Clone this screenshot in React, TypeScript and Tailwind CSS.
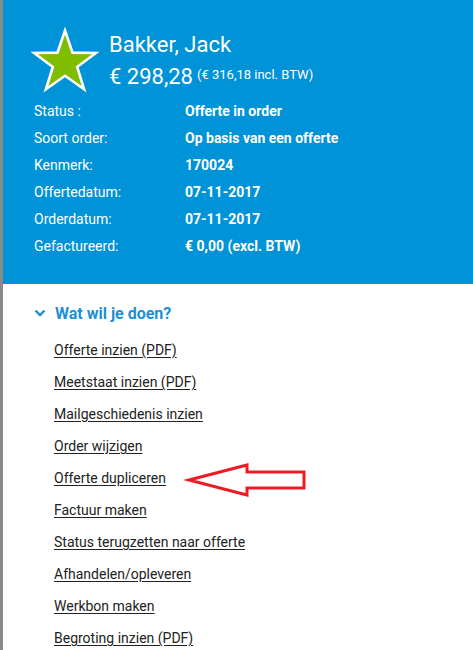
import React from "react";

const rows: [string, string][] = [
  ["Status :", "Offerte in order"],
  ["Soort order:", "Op basis van een offerte"],
  ["Kenmerk:", "170024"],
  ["Offertedatum:", "07-11-2017"],
  ["Orderdatum:", "07-11-2017"],
  ["Gefactureerd:", "€ 0,00 (excl. BTW)"],
];

const links = [
  "Offerte inzien (PDF)",
  "Meetstaat inzien (PDF)",
  "Mailgeschiedenis inzien",
  "Order wijzigen",
  "Offerte dupliceren",
  "Factuur maken",
  "Status terugzetten naar offerte",
  "Afhandelen/opleveren",
  "Werkbon maken",
  "Begroting inzien (PDF)",
];

function starPoints(cx: number, cy: number, R: number, r: number) {
  const pts: string[] = [];
  for (let i = 0; i < 10; i++) {
    const rad = i % 2 === 0 ? R : r;
    const a = (Math.PI / 5) * i;
    pts.push(`${(cx + rad * Math.sin(a)).toFixed(2)},${(cy - rad * Math.cos(a)).toFixed(2)}`);
  }
  return pts.join(" ");
}

export default function App() {
  return (
    <div
      className="relative flex h-[650px] w-[473px] overflow-hidden bg-white"
      style={{ fontFamily: "Roboto, 'Liberation Sans', sans-serif" }}
    >
      <div className="w-[3px] shrink-0 bg-[#8a8a8a]" />
      <div className="flex flex-1 flex-col">
        <div className="bg-[#0093d8] pt-[26px] pb-[24px] text-white">
          <div className="flex items-start pl-[28px]">
            <svg width="68" height="68" viewBox="0 0 68 68" className="shrink-0">
              <polygon
                points={starPoints(34, 37, 32.5, 12.8)}
                fill="#80bd00"
                stroke="#ffffff"
                strokeWidth="2.6"
                strokeLinejoin="miter"
              />
            </svg>
            <div className="ml-[10px] mt-[6px] flex flex-col gap-[4px]">
              <div className="text-[22px] leading-[26px]">Bakker, Jack</div>
              <div className="whitespace-nowrap text-[22px] leading-[26px]">
                € 298,28
                <span className="ml-[4px] align-[5px] text-[13px]">(€ 316,18 incl. BTW)</span>
              </div>
            </div>
          </div>
          <div className="mt-[4px] flex flex-col pl-[31px]">
            {rows.map(([l, v]) => (
              <div key={l} className="flex h-[27px] text-[14px] leading-[27px]">
                <div className="w-[151px] shrink-0">{l}</div>
                <div className="font-bold">{v}</div>
              </div>
            ))}
          </div>
        </div>
        <div className="pl-[31px] pt-[18px]">
          <div className="flex h-[24px] items-center text-[16px] font-bold leading-[24px] text-[#1c90d7]">
            <svg width="12" height="10" viewBox="0 0 12 10" className="mr-[9px] mt-[-2px]">
              <polyline
                points="1.5,2.5 6,7 10.5,2.5"
                fill="none"
                stroke="#1c90d7"
                strokeWidth="2.4"
                strokeLinecap="butt"
              />
            </svg>
            <span>Wat wil je doen?</span>
          </div>
          <div className="mt-[8px] flex flex-col pl-[20px]">
            {links.map((t) => (
              <div key={t} className="h-[32px] text-[14px] leading-[32px]">
                <a href="#" className="text-[#222222] underline underline-offset-[2px]">
                  {t}
                </a>
              </div>
            ))}
          </div>
        </div>
      </div>
      <svg
        className="pointer-events-none absolute left-0 top-0"
        width="473"
        height="650"
        viewBox="0 0 473 650"
      >
        <polygon
          points="189,480 247,465 247,472 304,472 304,488 247,488 247,495"
          fill="none"
          stroke="#ed1c24"
          strokeWidth="3"
          strokeLinejoin="miter"
        />
      </svg>
    </div>
  );
}
